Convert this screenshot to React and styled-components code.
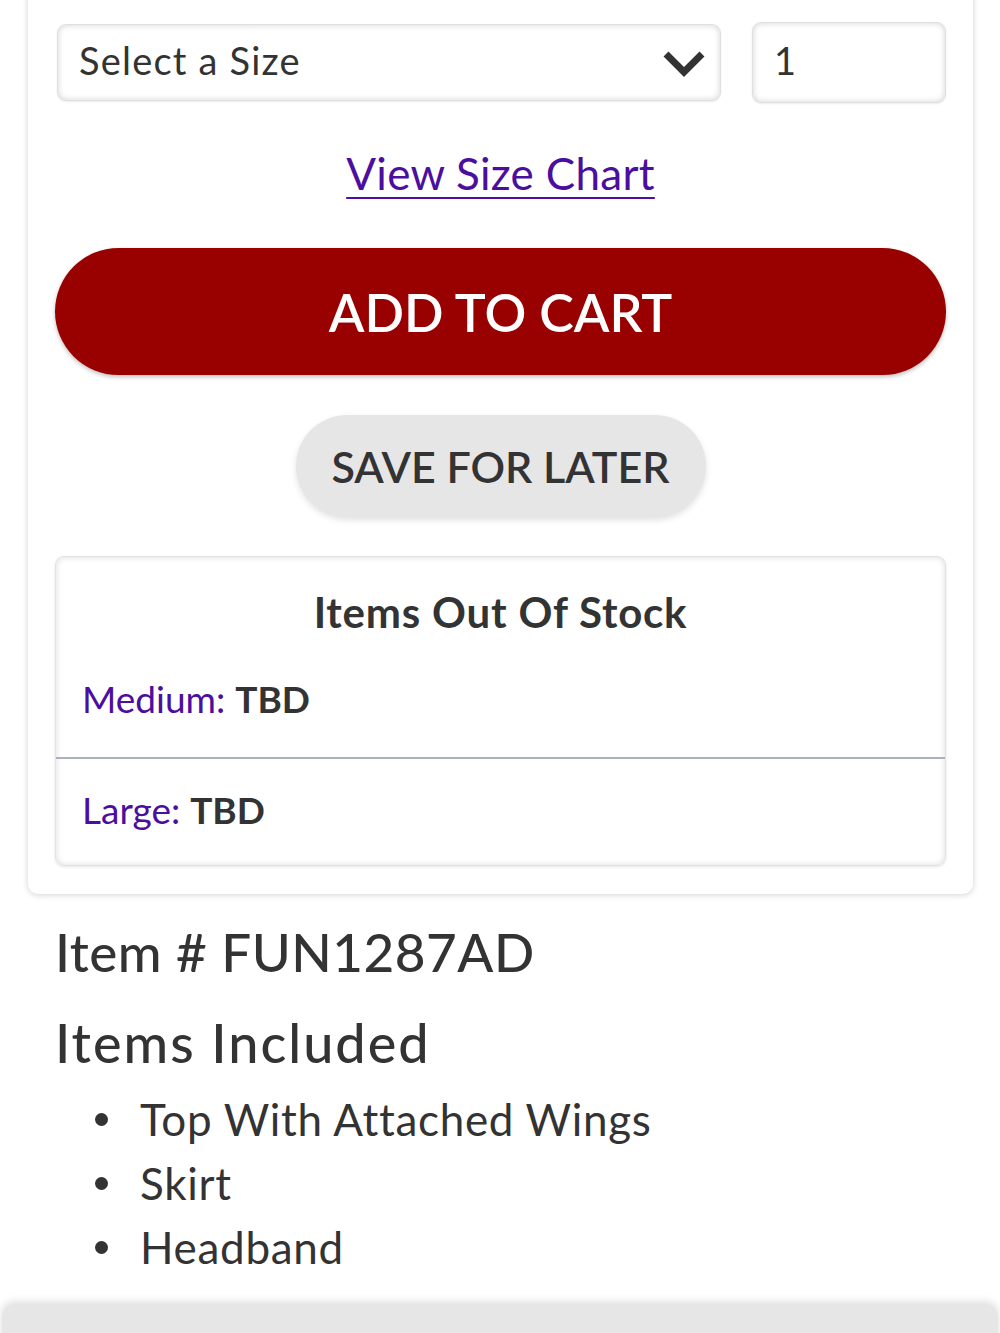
import React from 'react';
import styled, { createGlobalStyle } from 'styled-components';

const GlobalStyle = createGlobalStyle`
  html, body {
    margin: 0;
    padding: 0;
    background: #fff;
    font-family: Lato, "Open Sans", sans-serif;
    color: #333;
  }
`;

const Page = styled.div`
  width: 1000px;
  height: 1333px;
  overflow: hidden;
  position: relative;
  display: flex;
  flex-direction: column;
`;

const Card = styled.div`
  margin: -14px 27px 0 28px;
  padding: 36px 27px 28px 27px;
  background: #fff;
  border-radius: 0 0 10px 10px;
  box-shadow: 0 1px 6px rgba(0, 0, 0, 0.18);
  display: flex;
  flex-direction: column;
`;

const SelectRow = styled.div`
  display: flex;
  align-items: center;
  gap: 31px;
  padding-left: 2px;
`;

const Field = styled.div`
  box-sizing: border-box;
  height: ${p => p.$h}px;
  width: ${p => p.$w}px;
  border-radius: 9px;
  background: #fff;
  border: 1px solid #e0e0e0;
  box-shadow: inset 0 0 6px rgba(0, 0, 0, 0.18), 0 1px 2px rgba(0, 0, 0, 0.08);
  display: flex;
  align-items: center;
  justify-content: space-between;
  padding: 0 14px 6px 21px;
  font-size: 38px;
  letter-spacing: 1.2px;
  color: #333;
`;

const ChevronIcon = styled.svg`
  margin-top: 6px;
`;

const Chevron = () => (
  <ChevronIcon width="44" height="28" viewBox="0 0 44 28">
    <path d="M4 5 L22 23 L40 5" fill="none" stroke="#333" strokeWidth="7" />
  </ChevronIcon>
);

const ChartLink = styled.a`
  align-self: center;
  margin-top: 48px;
  font-size: 44px;
  letter-spacing: 0.3px;
  color: #4b0e9e;
  text-decoration: underline;
  text-decoration-thickness: 2px;
  text-underline-offset: 7px;
  line-height: 1;
`;

const CartButton = styled.button`
  margin-top: 53px;
  height: 127px;
  width: 100%;
  border: none;
  border-radius: 64px;
  background: #990000;
  color: #fff;
  font-family: Lato, sans-serif;
  font-size: 52px;
  font-weight: 600;
  box-shadow: 0 2px 4px rgba(0, 0, 0, 0.25);
`;

const SaveButton = styled.button`
  align-self: center;
  margin-top: 40px;
  height: 102px;
  width: 410px;
  border: none;
  border-radius: 51px;
  background: #e6e6e6;
  color: #333;
  font-family: Lato, sans-serif;
  font-size: 43px;
  font-weight: 600;
  box-shadow: 0 3px 6px rgba(0, 0, 0, 0.12);
`;

const StockBox = styled.div`
  margin-top: 39px;
  border-radius: 9px;
  border: 1px solid #e2e2e2;
  box-shadow: inset 0 0 6px rgba(0, 0, 0, 0.14), 0 1px 3px rgba(0, 0, 0, 0.1);
  display: flex;
  flex-direction: column;
`;

const StockTitle = styled.div`
  text-align: center;
  font-size: 42px;
  font-weight: 700;
  letter-spacing: 0.8px;
  color: #333;
  padding-top: 31px;
  line-height: 48px;
`;

const StockRow = styled.div`
  box-sizing: border-box;
  padding: ${p => p.$top}px 26px ${p => p.$bottom}px;
  height: ${p => p.$h}px;
  display: flex;
  align-items: center;
  font-size: 37px;
  border-top: ${p => (p.$divided ? '2px solid #aab2bd' : 'none')};
`;

const SizeName = styled.span`
  color: #4b0e9e;
  margin-right: 10px;
`;

const Tbd = styled.span`
  font-weight: 700;
  color: #333;
`;

const Details = styled.div`
  padding: 26px 55px 0;
`;

const ItemNo = styled.div`
  font-size: 53px;
  font-weight: 500;
  letter-spacing: 0.5px;
  color: #333;
  line-height: 64px;
`;

const Heading = styled.div`
  margin-top: 27px;
  font-size: 54px;
  font-weight: 500;
  letter-spacing: 2px;
  color: #333;
  line-height: 64px;
`;

const List = styled.ul`
  margin: 12px 0 0;
  padding-left: 40px;
  list-style: none;
`;

const Item = styled.li`
  display: flex;
  align-items: center;
  font-size: 44px;
  letter-spacing: 0.7px;
  line-height: 64px;
  color: #333;
  &::before {
    content: '';
    width: 13px;
    height: 13px;
    border-radius: 50%;
    background: #333;
    margin-right: 32px;
    flex-shrink: 0;
  }
`;

const BottomBar = styled.div`
  position: absolute;
  left: 2px;
  right: 2px;
  top: 1305px;
  height: 60px;
  background: #e6e6e6;
  border-radius: 12px 12px 0 0;
  box-shadow: 0 -3px 8px rgba(0, 0, 0, 0.14);
`;

export default function App() {
  return (
    <Page>
      <GlobalStyle />
      <Card>
        <SelectRow>
          <Field $w={664} $h={77}>
            <span>Select a Size</span>
            <Chevron />
          </Field>
          <Field $w={194} $h={81}>
            <span>1</span>
          </Field>
        </SelectRow>
        <ChartLink href="#">View Size Chart</ChartLink>
        <CartButton>ADD TO CART</CartButton>
        <SaveButton>SAVE FOR LATER</SaveButton>
        <StockBox>
          <StockTitle>Items Out Of Stock</StockTitle>
          <StockRow $h={121} $top={4} $bottom={0}>
            <SizeName>Medium:</SizeName>
            <Tbd>TBD</Tbd>
          </StockRow>
          <StockRow $h={108} $top={0} $bottom={6} $divided>
            <SizeName>Large:</SizeName>
            <Tbd>TBD</Tbd>
          </StockRow>
        </StockBox>
      </Card>
      <Details>
        <ItemNo>Item # FUN1287AD</ItemNo>
        <Heading>Items Included</Heading>
        <List>
          <Item>Top With Attached Wings</Item>
          <Item>Skirt</Item>
          <Item>Headband</Item>
        </List>
      </Details>
      <BottomBar />
    </Page>
  );
}
